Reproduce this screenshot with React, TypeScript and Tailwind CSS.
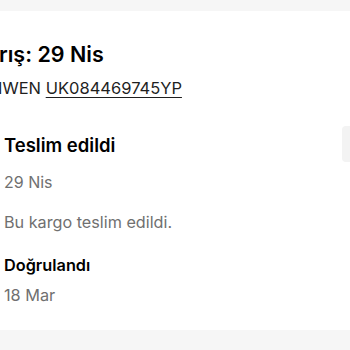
import React from "react";

export default function App() {
  return (
    <div
      className="w-[350px] h-[350px] bg-white overflow-hidden flex flex-col relative"
      style={{ fontFamily: "Inter, 'Noto Sans', sans-serif" }}
    >
      <div className="h-[11px] bg-[#f6f6f6] shrink-0" />
      <div className="flex-1 flex flex-col overflow-hidden">
        <div className="pt-[29px] whitespace-nowrap">
          <div className="text-[21.5px] leading-[28px] font-semibold text-black ml-[-1px]">
            rış: 29 Nis
          </div>
          <div className="mt-[9px] text-[16.5px] leading-[22px] text-[#1f1f1f] ml-[-10px]">
            NWEN <span className="underline underline-offset-[3px]">UK084469745YP</span>
          </div>
        </div>
        <div className="pl-[4px] pt-[34px] flex flex-col">
          <div className="text-[18.5px] leading-[24px] font-semibold text-black">Teslim edildi</div>
          <div className="mt-[14px] text-[16px] leading-[22px] text-[#707070]">29 Nis</div>
          <div className="mt-[18px] text-[16.2px] leading-[22px] text-[#707070]">Bu kargo teslim edildi.</div>
          <div className="mt-[21px] text-[16.3px] leading-[22px] font-semibold text-black">Doğrulandı</div>
          <div className="mt-[8px] text-[16.3px] leading-[22px] text-[#707070]">18 Mar</div>
        </div>
      </div>
      <div className="h-[20px] bg-[#f6f6f6] shrink-0" />
      <div className="absolute right-0 top-[126px] w-[8px] h-[36px] bg-[#f3f3f3] rounded-l-[4px]" />
    </div>
  );
}
